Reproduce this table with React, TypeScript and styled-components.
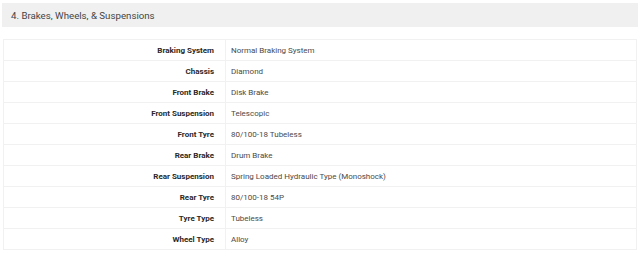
import React from "react";
import styled, { createGlobalStyle } from "styled-components";

const Global = createGlobalStyle`
  html, body { margin: 0; padding: 0; background: #fff; }
  body { font-family: Roboto, "Noto Sans", Arial, sans-serif; }
`;

const Page = styled.div`
  width: 640px;
  padding-top: 3px;
`;

const Header = styled.div`
  margin: 0 2px;
  height: 24px;
  background: #f0f0f0;
  display: flex;
  align-items: center;
  padding-left: 9px;
  font-size: 9.7px;
  color: #444;
`;

const Table = styled.table`
  margin: 12px 0 0 3px;
  width: 634px;
  border-collapse: collapse;
  border: 1px solid #f1f1f1;
  font-size: 8px;
`;

const Row = styled.tr`
  height: 21px;
  border-bottom: 1px solid #f1f1f1;
`;

const Label = styled.td`
  width: 222px;
  box-sizing: border-box;
  text-align: right;
  padding: 0 11px 0 0;
  font-weight: 700;
  color: #2a2a2a;
  border-right: 1px solid #f1f1f1;
  vertical-align: middle;
`;

const Value = styled.td`
  padding: 0 0 0 5px;
  color: #4a4a4a;
  vertical-align: middle;
`;

const rows: [string, string][] = [
  ["Braking System", "Normal Braking System"],
  ["Chassis", "Diamond"],
  ["Front Brake", "Disk Brake"],
  ["Front Suspension", "Telescopic"],
  ["Front Tyre", "80/100-18 Tubeless"],
  ["Rear Brake", "Drum Brake"],
  ["Rear Suspension", "Spring Loaded Hydraulic Type (Monoshock)"],
  ["Rear Tyre", "80/100-18 54P"],
  ["Tyre Type", "Tubeless"],
  ["Wheel Type", "Alloy"],
];

export default function App() {
  return (
    <Page>
      <Global />
      <Header>4. Brakes, Wheels, &amp; Suspensions</Header>
      <Table>
        <tbody>
          {rows.map(([k, v]) => (
            <Row key={k}>
              <Label>{k}</Label>
              <Value>{v}</Value>
            </Row>
          ))}
        </tbody>
      </Table>
    </Page>
  );
}
